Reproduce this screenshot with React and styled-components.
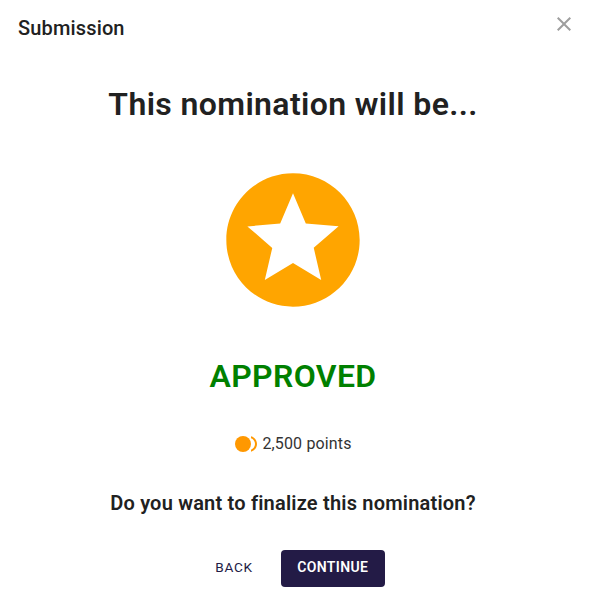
import React from "react";
import styled, { createGlobalStyle } from "styled-components";

const App = () => (
    <Dialog>
        <GlobalStyle />
        <Header>
            <HeaderTitle>Submission</HeaderTitle>
            <CloseButton aria-label="Close">
                <Icon size={24} viewBox="0 0 24 24">
                    <path d="M19 6.41 17.59 5 12 10.59 6.41 5 5 6.41 10.59 12 5 17.59 6.41 19 12 13.41 17.59 19 19 17.59 13.41 12z" />
                </Icon>
            </CloseButton>
        </Header>
        <Content>
            <Title>This nomination will be...</Title>
            <StarIcon size={160} viewBox="0 0 24 24">
                <path d="M11.99 2C6.47 2 2 6.48 2 12s4.47 10 9.99 10C17.52 22 22 17.52 22 12S17.52 2 11.99 2zm4.24 16L12 15.45 7.77 18l1.12-4.81-3.73-3.23 4.92-.42L12 5l1.92 4.53 4.92.42-3.73 3.23L16.23 18z" />
            </StarIcon>
            <Status>APPROVED</Status>
            <Points>
                <PointsIcon size={24} viewBox="0 0 24 24">
                    <circle cx="9" cy="12" r="8" />
                    <path d="M17 4.26v2.09c2.33.82 4 3.04 4 5.65s-1.67 4.83-4 5.65v2.09c3.45-.89 6-4.01 6-7.74s-2.55-6.85-6-7.74z" />
                </PointsIcon>
                <span>2,500 points</span>
            </Points>
            <Question>Do you want to finalize this nomination?</Question>
            <Actions>
                <Button>BACK</Button>
                <PrimaryButton>CONTINUE</PrimaryButton>
            </Actions>
        </Content>
    </Dialog>
);

const GlobalStyle = createGlobalStyle`
    body {
        margin: 0;
        background-color: white;
        font-family: Roboto, sans-serif;
        color: #212121;
    }
`;
const Dialog = styled.div`
    box-sizing: border-box;
    width: 590px;
    height: 597px;
    overflow: hidden;
    background-color: white;
`;
const Header = styled.div`
    display: flex;
    justify-content: space-between;
    align-items: flex-start;
    height: 56px;
    box-sizing: border-box;
    padding: 12px 14px 0 18px;
`;
const HeaderTitle = styled.h2`
    margin: 0;
    font-size: 20px;
    font-weight: 500;
    line-height: 32px;
    letter-spacing: 0.15px;
`;
const CloseButton = styled.button`
    display: flex;
    padding: 0;
    border: 0;
    background: none;
    color: #9e9e9e;
`;
const Icon = styled.svg`
    display: block;
    flex-shrink: 0;
    width: ${({ size }) => size}px;
    height: ${({ size }) => size}px;
    fill: currentColor;
`;
const Content = styled.div`
    display: flex;
    flex-direction: column;
    align-items: center;
    width: 586px;
`;
const Title = styled.h1`
    margin: 28px 0 0;
    font-size: 32px;
    font-weight: 600;
    line-height: 40px;
    letter-spacing: 0.38px;
    white-space: nowrap;
`;
const StarIcon = styled(Icon)`
    margin-top: 36px;
    color: #ffa500;
`;
const Status = styled.h1`
    margin: 36px 0 0;
    color: green;
    font-size: 32px;
    font-weight: 600;
    line-height: 40px;
    letter-spacing: 0.38px;
`;
const Points = styled.div`
    display: flex;
    align-items: center;
    gap: 4px;
    margin-top: 36px;
    color: #333;
    font-size: 16px;
    line-height: 24px;
    letter-spacing: 0.15px;
`;
const PointsIcon = styled(Icon)`
    color: #ff9800;
`;
const Question = styled.h3`
    margin: 31px 0 0;
    font-size: 20px;
    font-weight: 600;
    line-height: 32px;
    letter-spacing: 0.2px;
    white-space: nowrap;
`;
const Actions = styled.div`
    display: flex;
    gap: 12px;
    margin: 31px 2px 0 0;
`;
const Button = styled.button`
    height: 37px;
    padding: 0 16px 3px;
    border: 0;
    border-radius: 4px;
    background: none;
    color: #231b46;
    font-family: inherit;
    font-size: 13.6px;
    font-weight: 400;
    letter-spacing: 0.7px;
`;
const PrimaryButton = styled(Button)`
    width: 104px;
    background-color: #231b46;
    color: white;
    font-size: 14px;
    font-weight: 600;
    letter-spacing: 0.38px;
`;

export default App;
